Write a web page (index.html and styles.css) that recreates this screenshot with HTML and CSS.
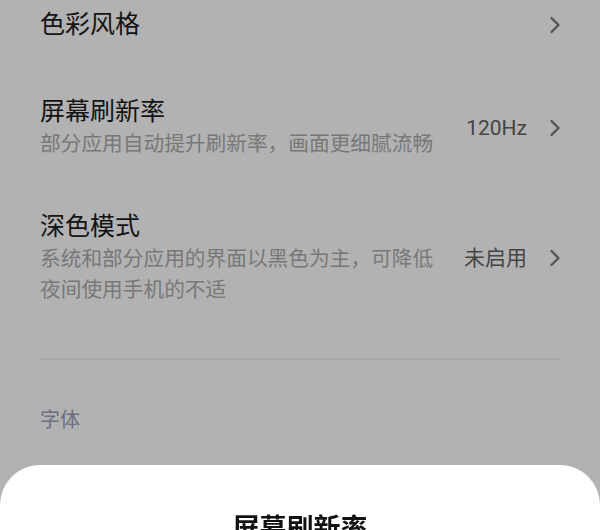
FILE: index.html
```html
<!DOCTYPE html>
<html lang="zh-CN">

<head>
    <meta charset="UTF-8">
    <meta name="viewport" content="width=device-width, initial-scale=1.0">
    <title>显示</title>
    <link rel="stylesheet" href="styles.css">
</head>

<body>
    <div class="screen">
        <ul class="settings">
            <li class="row row-cut">
                <div class="text">
                    <p class="title">色彩风格</p>
                </div>
                <div class="side">
                    <svg class="chevron" viewBox="0 0 12 18"><path d="M2.5 2 L9.5 9 L2.5 16" /></svg>
                </div>
            </li>
            <li class="row">
                <div class="text">
                    <p class="title">屏幕刷新率</p>
                    <p class="desc">部分应用自动提升刷新率，画面更细腻流畅</p>
                </div>
                <div class="side">
                    <span class="value">120Hz</span>
                    <svg class="chevron" viewBox="0 0 12 18"><path d="M2.5 2 L9.5 9 L2.5 16" /></svg>
                </div>
            </li>
            <li class="row">
                <div class="text">
                    <p class="title">深色模式</p>
                    <p class="desc">系统和部分应用的界面以黑色为主，可降低夜间使用手机的不适</p>
                </div>
                <div class="side">
                    <span class="value">未启用</span>
                    <svg class="chevron" viewBox="0 0 12 18"><path d="M2.5 2 L9.5 9 L2.5 16" /></svg>
                </div>
            </li>
        </ul>

        <hr class="divider">

        <h3 class="section">字体</h3>

        <!-- bottom sheet over the dimmed list -->
        <div class="sheet">
            <h2 class="sheet-title">屏幕刷新率</h2>
        </div>
    </div>
</body>

</html>
```

FILE: styles.css
```css
html,
body {
    margin: 0;
    padding: 0;
}

body {
    font-family: Roboto, "Noto Sans CJK SC", sans-serif;
    background: #b2b2b2;
    color: #111;
}

.screen {
    width: 600px;
    height: 530px;
    overflow: hidden;
}

.settings {
    list-style-type: none;
    margin: 0;
    padding: 0 39px 0 40px;
}

.row {
    display: flex;
    align-items: center;
    padding: 27px 0 23px;
}

.row-cut {
    padding: 8px 0 26px;
}

.row:last-child {
    padding-bottom: 25px;
}

.text {
    flex: 1;
    min-width: 0;
    padding-right: 28px;
}

.text p {
    margin: 0;
}

.title {
    font-size: 25px;
    line-height: 34px;
    color: #141414;
}

.desc {
    font-size: 20.7px;
    line-height: 31px;
    color: #787878;
}

.side {
    display: flex;
    align-items: center;
    gap: 22px;
}

.value {
    font-size: 21px;
    line-height: 30px;
    color: #444;
}

.chevron {
    width: 12px;
    height: 18px;
    display: block;
}

.chevron path {
    fill: none;
    stroke: #565656;
    stroke-width: 2.4;
    stroke-linecap: round;
    stroke-linejoin: round;
}

.divider {
    margin: 27px 39px 0 40px;
    border: none;
    border-top: 2px solid #a9a9a9;
}

.section {
    margin: 46px 40px 0;
    font-size: 20px;
    line-height: 28px;
    font-weight: normal;
    color: #6b6e7e;
}

.sheet {
    position: fixed;
    top: 465px;
    left: 0;
    right: 0;
    bottom: 0;
    background: #fff;
    border-radius: 40px 40px 0 0;
    padding-top: 46px;
}

.sheet-title {
    margin: 0;
    text-align: center;
    font-size: 27px;
    line-height: 36px;
    font-weight: bold;
    color: #111;
}
```
